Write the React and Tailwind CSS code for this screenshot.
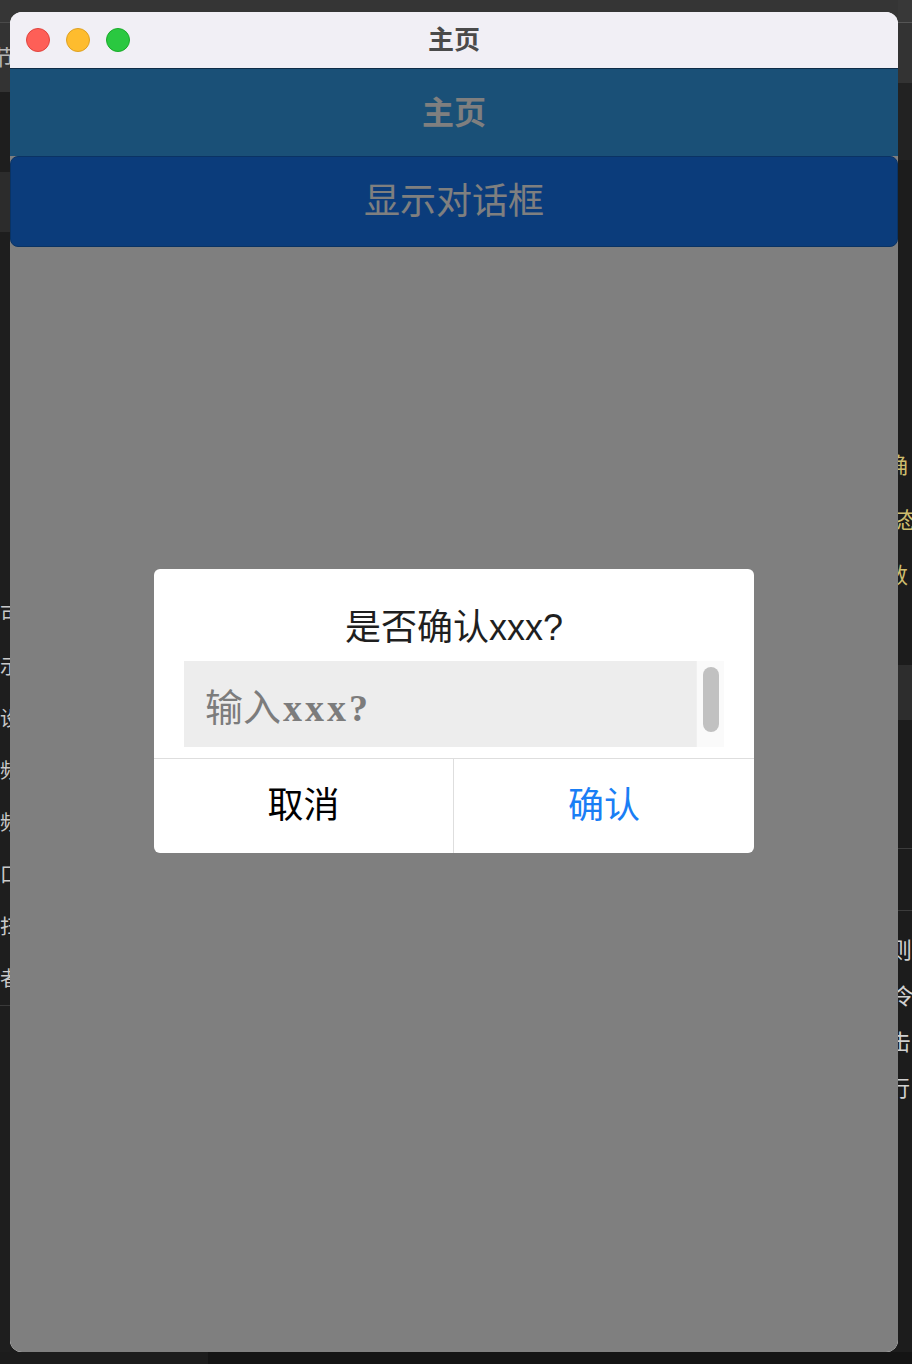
import { useState } from 'react';

const leftChars = ['可', '示', '设', '频', '频', '口', '扫', '者'];
const rightLower = [
  { ch: '则', shift: '-ml-[8px]' },
  { ch: '令', shift: '-ml-[6px]' },
  { ch: '击', shift: '-ml-[9px]' },
  { ch: '行', shift: '-ml-[10px]' },
];

function LeftStrip() {
  return (
    <div className="flex w-[10px] shrink-0 flex-col overflow-hidden bg-[#1e1e1e]">
      <div className="h-[22px] bg-[#363636]" />
      <div className="h-[1px] bg-[#4a4a4a]" />
      <div className="flex h-[69px] items-center bg-[#333333] text-[22px] text-[#b5b5b5]">
        <span className="-ml-[8px] whitespace-nowrap">节</span>
      </div>
      <div className="h-[80px]" />
      <div className="h-[60px] bg-[#2c2c2c]" />
      <div className="h-[357px]" />
      {leftChars.map((ch, i) => (
        <div key={i} className="flex h-[52px] items-center text-[20px] text-[#c9c9c9]">
          <span className="whitespace-nowrap">{ch}</span>
        </div>
      ))}
      <div className="h-[1px] bg-[#3a3a3a]" />
    </div>
  );
}

function RightStrip() {
  return (
    <div className="flex flex-1 flex-col overflow-hidden bg-[#1c1c1c]">
      <div className="h-[22px] bg-[#383838]" />
      <div className="h-[1px] bg-[#555555]" />
      <div className="h-[60px] bg-[#333333]" />
      <div className="h-[77px] bg-[#222222]" />
      <div className="h-[278px]" />
      {[
        { ch: '确', shift: '-ml-[12px]' },
        { ch: '态', shift: '-ml-[2px]' },
        { ch: '数', shift: '-ml-[12px]' },
      ].map((c, i) => (
        <div key={i} className="flex h-[55px] items-center text-[22px] text-[#cdbd6e]">
          <span className={`${c.shift} whitespace-nowrap`}>{c.ch}</span>
        </div>
      ))}
      <div className="h-[62px]" />
      <div className="h-[55px] bg-[#2d2d2d]" />
      <div className="h-[128px]" />
      <div className="h-[1px] bg-[#3c3c3c]" />
      <div className="h-[61px]" />
      <div className="h-[1px] bg-[#3c3c3c]" />
      <div className="h-[16px]" />
      {rightLower.map((c, i) => (
        <div key={i} className="flex h-[46px] items-center text-[22px] text-[#d0d0d0]">
          <span className={`${c.shift} whitespace-nowrap`}>{c.ch}</span>
        </div>
      ))}
    </div>
  );
}

function TrafficLights() {
  return (
    <div className="flex items-center gap-[16px] pl-[16px]">
      <span className="h-[24px] w-[24px] rounded-full border border-[#e0443e] bg-[#fe5f57]" />
      <span className="h-[24px] w-[24px] rounded-full border border-[#dea123] bg-[#febc2e]" />
      <span className="h-[24px] w-[24px] rounded-full border border-[#1aab29] bg-[#2ac840]" />
    </div>
  );
}

function ConfirmDialog() {
  const [value, setValue] = useState('');

  return (
    <div className="w-[600px] overflow-hidden rounded-[6px] bg-white">
      <div className="px-[30px] pt-[37px]">
        <p className="text-center text-[36px] leading-[43px] text-[#1f1f1f]">是否确认xxx?</p>
        <div className="mt-[12px] flex h-[86px]">
          <div className="relative flex flex-1 items-center bg-[#ededed] pl-[21px]">
            {value === '' && (
              <span className="pointer-events-none absolute left-[21px] top-[25px] whitespace-nowrap text-[38px] leading-[44px] text-[#7c7c7c]">
                输入
                <span className="ml-[2px] font-['Liberation_Serif',serif] font-bold tracking-[3px]">xxx?</span>
              </span>
            )}
            <input
              value={value}
              onChange={(e) => setValue(e.target.value)}
              className="w-full bg-transparent text-[38px] text-[#333] outline-none"
            />
          </div>
          <div className="flex w-[28px] justify-center border-l border-[#f0f0f0] bg-[#fafafa] pt-[6px]">
            <div className="h-[65px] w-[16px] rounded-full bg-[#c1c1c1]" />
          </div>
        </div>
      </div>
      <div className="mt-[11px] grid grid-cols-2 border-t border-[#dedede]">
        <button className="h-[94px] border-r border-[#dedede] text-[36px] text-black">取消</button>
        <button className="h-[94px] text-[36px] text-[#1a7ef5]">确认</button>
      </div>
    </div>
  );
}

function AppWindow() {
  return (
    <div className="flex h-[1340px] flex-col overflow-hidden rounded-[12px] bg-white">
      <div className="grid h-[57px] shrink-0 grid-cols-[1fr_auto_1fr] items-center border-b border-[#0e2c47] bg-[#f1eff5]">
        <TrafficLights />
        <span className="text-[26px] font-bold text-[#4a4a4a]">主页</span>
        <div />
      </div>
      <div className="relative flex flex-1 flex-col bg-white">
        <div className="flex h-[87px] items-center justify-center bg-[#34a0ee] text-[32px] font-bold text-white">
          主页
        </div>
        <button className="flex h-[91px] items-center justify-center rounded-[8px] border border-[#1466c8] bg-[#1679f6] text-[36px] text-white">
          显示对话框
        </button>
        <div className="absolute inset-0 flex items-center justify-center bg-black/50">
          <ConfirmDialog />
        </div>
      </div>
    </div>
  );
}

export default function App() {
  return (
    <div className="flex h-[1364px] w-[912px] flex-col overflow-hidden bg-[#1c1c1c] font-['Liberation_Sans','Noto_Sans_CJK_SC',sans-serif]">
      <div className="flex h-[1352px]">
        <LeftStrip />
        <div className="flex w-[888px] shrink-0 flex-col bg-[linear-gradient(#353535_0,#353535_80px,#1c1c1c_80px)]">
          <div className="h-[12px]" />
          <AppWindow />
        </div>
        <RightStrip />
      </div>
      <div className="flex h-[12px]">
        <div className="w-[208px] bg-[#1c1c1c]" />
        <div className="flex-1 bg-[#141414]" />
      </div>
    </div>
  );
}
